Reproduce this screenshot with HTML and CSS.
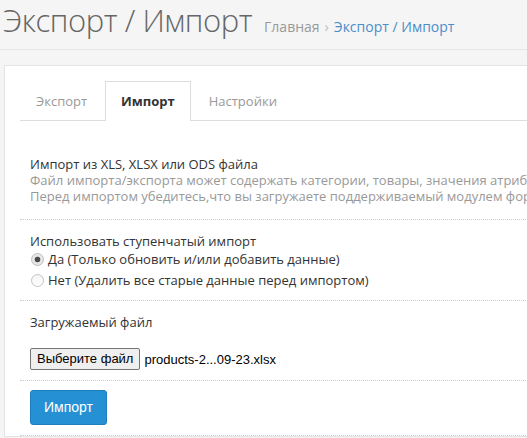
FILE: index.html
```html
<!DOCTYPE html>
<html lang="ru">
<head>
<meta charset="utf-8">
<link rel="stylesheet" href="styles.css">
</head>
<body>
<div class="page-head">
  <h1 class="title">Экспорт / Импорт</h1>
  <ul class="crumbs">
    <li class="crumb">Главная</li>
    <li class="sep">›</li>
    <li class="crumb active">Экспорт / Импорт</li>
  </ul>
</div>
<div class="panel">
  <ul class="tabs">
    <li class="tab">Экспорт</li>
    <li class="tab current">Импорт</li>
    <li class="tab">Настройки</li>
  </ul>
  <div class="group first">
    <div class="label">Импорт из XLS, XLSX или ODS файла</div>
    <div class="help">Файл импорта/экспорта может содержать категории, товары, значения атрибутов, опций и фильтров.</div>
    <div class="help">Перед импортом убедитесь,что вы загружаете поддерживаемый модулем формат файла.</div>
  </div>
  <div class="group second">
    <div class="label">Использовать ступенчатый импорт</div>
    <label class="radio"><span class="dot checked"></span>Да (Только обновить и/или добавить данные)</label>
    <label class="radio"><span class="dot"></span>Нет (Удалить все старые данные перед импортом)</label>
  </div>
  <div class="group third">
    <div class="label">Загружаемый файл</div>
    <div class="file"><span class="file-btn">Выберите файл</span><span class="file-name">products-2...09-23.xlsx</span></div>
  </div>
  <div class="group actions">
    <span class="btn">Импорт</span>
  </div>
</div>
</body>
</html>
```
FILE: styles.css
```css
html, body {
  margin: 0;
  padding: 0;
  background: #f5f5f5;
  overflow: hidden;
  font-family: "Open Sans", sans-serif;
  color: #333;
}
.page-head {
  display: flex;
  align-items: baseline;
  padding: 0 0 0 3px;
  height: 49px;
  border-bottom: 1px solid #e6e6e6;
  width: 600px;
}
.title {
  margin: 0;
  font-weight: 300;
  font-size: 31px;
  line-height: 40px;
  color: #666;
  letter-spacing: -0.45px;
}
.crumbs {
  display: flex;
  list-style: none;
  margin: 0 0 0 12px;
  padding: 0;
  font-size: 14px;
  color: #999;
}
.sep {
  margin: 0 5px;
  color: #bbb;
}
.crumb.active {
  color: #4b8dc9;
}
.panel {
  margin: 15px 0 0 4px;
  width: 600px;
  background: #fff;
  border: 1px solid #e3e3e3;
  padding: 15px 0 0 15px;
}
.tabs {
  display: flex;
  list-style: none;
  margin: 0;
  padding: 0;
  border-bottom: 1px solid #ddd;
  height: 39px;
}
.tab {
  padding: 0 15px;
  font-size: 13px;
  line-height: 39px;
  color: #999;
  border: 1px solid transparent;
  border-bottom: none;
  margin-right: 2px;
}
.tab.current {
  background: #fff;
  border-color: #ddd;
  color: #333;
  font-weight: 700;
  height: 39px;
}
.group {
  padding: 13px 10px 10px;
  border-bottom: 1px dotted #ccc;
  font-size: 13px;
}
.group.first {
  padding-top: 35px;
  padding-bottom: 15px;
}
.group.second {
  padding-bottom: 9px;
}
.label {
  line-height: 16px;
}
.help {
  color: #999;
  line-height: 16px;
  white-space: nowrap;
}
.radio {
  display: flex;
  align-items: center;
  line-height: 21px;
  color: #333;
}
.dot {
  width: 13px;
  height: 13px;
  border-radius: 50%;
  border: 1px solid #c4c4c4;
  margin: 0 4px 0 1px;
  background: linear-gradient(#f4f4f4, #fff);
  box-sizing: border-box;
}
.dot.checked {
  background: radial-gradient(circle, #4a4a4a 0 2.5px, #e6e6e6 3.2px);
  border-color: #bdbdbd;
}
.file {
  margin-top: 18px;
  display: flex;
  align-items: center;
  font-family: "Liberation Sans", Arial, sans-serif;
  font-size: 13px;
}
.file-btn {
  padding: 2px 6px;
  border: 1px solid #767676;
  border-radius: 2px;
  background: #efefef;
  color: #000;
  line-height: 16px;
}
.file-name {
  margin-left: 4px;
  color: #000;
}
.actions {
  padding-top: 9px;
  padding-bottom: 10px;
}
.btn {
  display: inline-block;
  vertical-align: top;
  background: #2591d4;
  border: 1px solid #1f7fbc;
  border-radius: 3px;
  color: #fff;
  font-family: "Liberation Sans", Arial, sans-serif;
  font-size: 14px;
  line-height: 33px;
  padding: 0 13px;
}
```
